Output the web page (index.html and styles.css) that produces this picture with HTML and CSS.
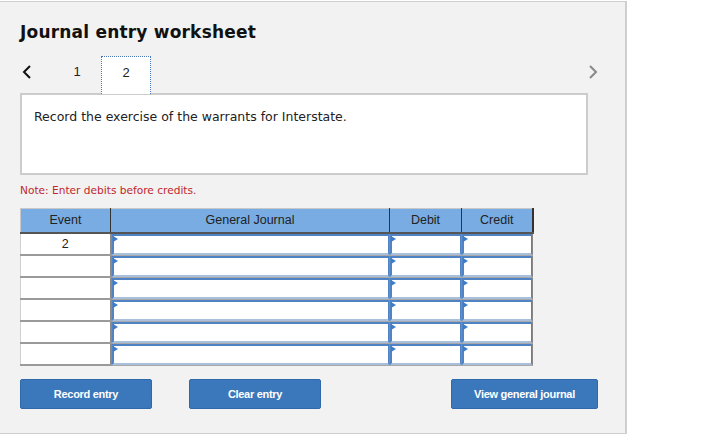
FILE: index.html
```html
<!DOCTYPE html>
<html>
<head>
<meta charset="utf-8">
<link rel="stylesheet" href="styles.css">
</head>
<body>
<div class="panel">
  <h1 class="title">Journal entry worksheet</h1>
  <div class="tabs">
    <span class="arrow prev">
      <svg width="10" height="14" viewBox="0 0 10 14"><path d="M8 1 L2 7 L8 13" fill="none" stroke="#111" stroke-width="2"/></svg>
    </span>
    <span class="tab plain">1</span>
    <span class="tab active">2</span>
    <span class="spacer"></span>
    <span class="arrow next">
      <svg width="10" height="14" viewBox="0 0 10 14"><path d="M2 1 L8 7 L2 13" fill="none" stroke="#888" stroke-width="2"/></svg>
    </span>
  </div>
  <div class="desc">Record the exercise of the warrants for Interstate.</div>
  <p class="note">Note: Enter debits before credits.</p>
  <table class="journal">
    <thead>
      <tr><th class="c-ev">Event</th><th class="c-gj">General Journal</th><th class="c-dr">Debit</th><th class="c-cr">Credit</th></tr>
    </thead>
    <tbody>
      <tr><td class="ev">2</td><td class="in"><div class="box"></div></td><td class="in"><div class="box"></div></td><td class="in"><div class="box"></div></td></tr>
      <tr><td class="ev"></td><td class="in"><div class="box"></div></td><td class="in"><div class="box"></div></td><td class="in"><div class="box"></div></td></tr>
      <tr><td class="ev"></td><td class="in"><div class="box"></div></td><td class="in"><div class="box"></div></td><td class="in"><div class="box"></div></td></tr>
      <tr><td class="ev"></td><td class="in"><div class="box"></div></td><td class="in"><div class="box"></div></td><td class="in"><div class="box"></div></td></tr>
      <tr><td class="ev"></td><td class="in"><div class="box"></div></td><td class="in"><div class="box"></div></td><td class="in"><div class="box"></div></td></tr>
      <tr><td class="ev"></td><td class="in"><div class="box"></div></td><td class="in"><div class="box"></div></td><td class="in"><div class="box"></div></td></tr>
    </tbody>
  </table>
  <div class="buttons">
    <button class="btn">Record entry</button>
    <button class="btn">Clear entry</button>
    <span class="spacer"></span>
    <button class="btn wide">View general journal</button>
  </div>
</div>
</body>
</html>
```
FILE: styles.css
```css
html, body {
  margin: 0;
  padding: 0;
  background: #fff;
}
.panel {
  box-sizing: border-box;
  width: 627px;
  height: 433px;
  margin-top: 1px;
  background: #f2f2f2;
  border: 1px solid #cfcfcf;
  border-left: none;
  border-right: 2px solid #cfcfcf;
  padding: 0 0 0 20px;
  font-family: "DejaVu Sans", Verdana, sans-serif;
}
.title {
  margin: 0;
  padding-top: 20px;
  height: 34px;
  box-sizing: border-box;
  font-size: 17px;
  font-weight: bold;
  color: #111;
  line-height: 20px;
  letter-spacing: 0.2px;
}
.tabs {
  display: flex;
  align-items: center;
  height: 38px;
  margin-top: 20px;
  width: 578px;
}
.arrow {
  display: flex;
  align-items: center;
  height: 38px;
  padding-bottom: 7px;
  box-sizing: border-box;
}
.prev { margin-left: 2px; }
.tab {
  box-sizing: border-box;
  height: 38px;
  display: flex;
  align-items: center;
  justify-content: center;
  padding-bottom: 7px;
  font-family: "Liberation Sans", Arial, sans-serif;
  font-size: 13px;
  color: #222;
}
.tab.plain { margin-left: 35px; width: 20px; }
.tab.active {
  width: 50px;
  margin-left: 14px;
  background: #fff;
  border: 1px dotted #4a78b8;
  border-bottom: none;
  position: relative;
  z-index: 1;
}
.spacer { flex: 1; }
.desc {
  box-sizing: border-box;
  width: 568px;
  height: 82px;
  background: #fff;
  border: 2px solid #cccccc;
  padding: 14px 12px;
  font-size: 12.5px;
  color: #222;
  margin-top: -1px;
}
.note {
  margin: 8px 0 0 0;
  font-size: 10.6px;
  color: #c0272d;
  height: 14px;
  line-height: 14px;
}
.journal {
  margin-top: 11px;
  border-collapse: collapse;
  width: 512px;
  table-layout: fixed;
  font-family: "Liberation Sans", Arial, sans-serif;
}
.journal th {
  background: #78ace2;
  height: 24px;
  box-sizing: border-box;
  padding: 0;
  font-size: 12.5px;
  font-weight: normal;
  color: #222;
  border-top: 1px solid #c8c8c8;
  border-bottom: 2px solid #555;
  border-right: 1px solid #333;
}
.journal th.c-ev { width: 90px; border-left: 1px solid #c8c8c8; }
.journal th.c-gj { width: 279px; }
.journal th.c-dr { width: 72px; }
.journal th.c-cr { width: 71px; border-right: 2px solid #333; }
.journal td {
  padding: 0;
  height: 22px;
  box-sizing: border-box;
}
.journal td.ev {
  background: #fff;
  text-align: center;
  font-size: 12.5px;
  color: #222;
  border-bottom: 2px solid #9a9a9a;
  border-right: 2px solid #8a8a8a;
  border-left: 1px solid #d0d0d0;
}
.journal td.in {
  border-bottom: 1px solid #a8a8a8;
  border-right: 1px solid #888;
  background: #fff;
}
.box {
  position: relative;
  box-sizing: border-box;
  height: 21px;
  background: #fff;
  border: 2px solid #4f83c3;
  border-bottom: 2px solid #a9c0dd;
  border-right-width: 1px;
}
.box::before {
  content: "";
  position: absolute;
  left: -1px;
  top: 0;
  border-left: 5px solid #3d7dc8;
  border-top: 3px solid transparent;
  border-bottom: 3px solid transparent;
}
.buttons {
  display: flex;
  margin-top: 13px;
  width: 578px;
}
.btn {
  height: 30px;
  width: 132px;
  background: #3a77bb;
  color: #fff;
  border: 1px solid #2f69aa;
  border-radius: 2px;
  font-family: "Liberation Sans", Arial, sans-serif;
  font-weight: bold;
  font-size: 11px;
  letter-spacing: -0.3px;
  padding: 0;
}
.btn + .btn { margin-left: 37px; }
.btn.wide { width: 147px; }
```
